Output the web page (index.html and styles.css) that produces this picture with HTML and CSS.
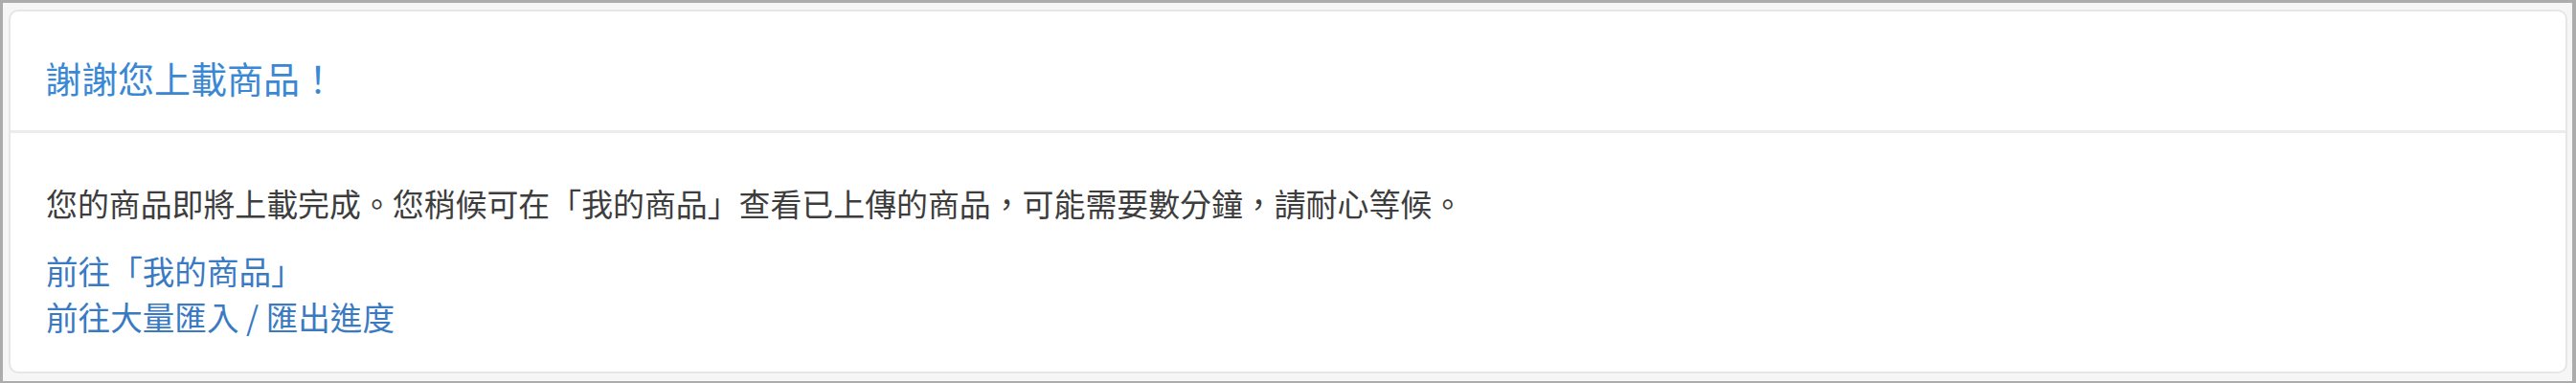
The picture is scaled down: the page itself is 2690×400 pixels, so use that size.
FILE: index.html
```html
<!DOCTYPE html>
<html lang="zh-Hant">

<head>
    <meta charset="UTF-8">
    <meta name="viewport" content="width=device-width, initial-scale=1.0">
    <title>上載完成</title>

    <link rel="stylesheet" href="styles.css">
</head>

<body>
    <section class="frame">
        <div class="panel">
            <div class="panel-heading">
                <h3 class="panel-title">謝謝您上載商品！</h3>
            </div>
            <div class="panel-body">
                <p class="message">您的商品即將上載完成。您稍候可在「我的商品」查看已上傳的商品，可能需要數分鐘，請耐心等候。</p>
                <ul class="links">
                    <li><a href="#">前往「我的商品」</a></li>
                    <li><a href="#">前往大量匯入 / 匯出進度</a></li>
                </ul>
            </div>
        </div>
    </section>
</body>

</html>
```

FILE: styles.css
```css
body,
html {
    padding: 0;
    margin: 0;
}

body {
    font-family: "Noto Sans CJK TC", "Noto Sans", sans-serif;
    background-color: #acacac;
}

.frame {
    height: 400px;
    box-sizing: border-box;
    border-style: solid;
    border-color: #acacac;
    border-width: 3px 4px 2px 3px;
    background-color: #f6f6f6;
    padding: 7px 5px 8px 6px;
}

.panel {
    height: 100%;
    box-sizing: border-box;
    background-color: #fff;
    border: 2px solid #e6e6e6;
    border-radius: 10px;
}

.panel-heading {
    padding: 48px 36px 34px;
    border-bottom: 3px solid #ececec;
}

.panel-title {
    margin: 0;
    font-size: 38px;
    font-weight: normal;
    line-height: 42px;
    color: #3a88d4;
}

.panel-body {
    padding: 49px 37px 30px;
    font-size: 33.6px;
    line-height: 48px;
    color: #3d3d3d;
}

.message {
    margin: 0 0 23px;
    font-size: 32.9px;
}

.links {
    list-style: none;
    margin: 0;
    padding: 0;
}

.links a {
    color: #3a7ac2;
    text-decoration: none;
}
```
